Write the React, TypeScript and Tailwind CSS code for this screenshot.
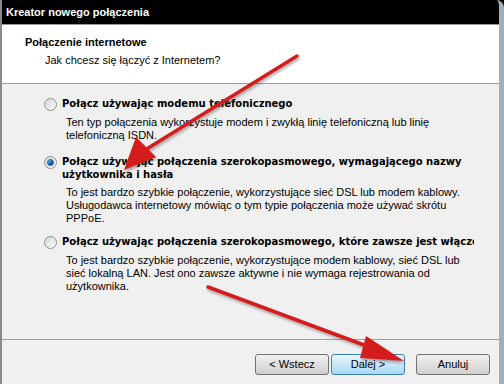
import React from 'react';

const OPTIONS = [
  {
    label: ['Połącz używając modemu telefonicznego'],
    desc: [
      'Ten typ połączenia wykorzystuje modem i zwykłą linię telefoniczną lub linię',
      'telefoniczną ISDN.',
    ],
    checked: false,
    gap: 'mt-0',
  },
  {
    label: ['Połącz używając połączenia szerokopasmowego, wymagającego nazwy', 'użytkownika i hasła'],
    desc: [
      'To jest bardzo szybkie połączenie, wykorzystujące sieć DSL lub modem kablowy.',
      'Usługodawca internetowy mówiąc o tym typie połączenia może używać skrótu',
      'PPPoE.',
    ],
    checked: true,
    gap: 'mt-[13px]',
  },
  {
    label: ['Połącz używając połączenia szerokopasmowego, które zawsze jest włączone'],
    desc: [
      'To jest bardzo szybkie połączenie, wykorzystujące modem kablowy, sieć DSL lub',
      'sieć lokalną LAN. Jest ono zawsze aktywne i nie wymaga rejestrowania od',
      'użytkownika.',
    ],
    checked: false,
    gap: 'mt-[10px]',
  },
];

// Vista style radio button
const Radio: React.FC<{ checked: boolean }> = ({ checked }) => (
  <div className="w-[13px] h-[13px] rounded-full border border-[#8e8f8f] bg-gradient-to-br from-[#d6d6d6] to-[#fbfbfb] flex items-center justify-center shrink-0">
    {checked && (
      <div className="w-[7px] h-[7px] rounded-full bg-gradient-to-br from-[#8fd3f7] via-[#2a6fb8] to-[#0c3a7a] border border-[#1b4f8f]" />
    )}
  </div>
);

const Button: React.FC<{ label: string; active?: boolean }> = ({ label, active }) => (
  <div
    className={`w-[74px] h-[21px] rounded-[3px] border flex items-center justify-center text-[11px] text-black ${
      active
        ? 'border-[#3c7fb1] bg-gradient-to-b from-[#eaf6fd] to-[#a7d9f5]'
        : 'border-[#707070] bg-gradient-to-b from-[#f2f2f2] to-[#cfcfcf]'
    }`}
  >
    {label}
  </div>
);

// red annotation arrows drawn on top of the screenshot
const Arrows: React.FC = () => (
  <svg className="absolute inset-0 pointer-events-none" width="504" height="384" viewBox="0 0 504 384">
    <defs>
      <filter id="sh" x="-20%" y="-20%" width="140%" height="140%">
        <feDropShadow dx="1" dy="2" stdDeviation="1.5" floodColor="#000" floodOpacity="0.35" />
      </filter>
    </defs>
    <g filter="url(#sh)" fill="#d51f1f" stroke="#d51f1f">
      <line x1="297" y1="56" x2="145" y2="150" strokeWidth="3.5" strokeLinecap="round" />
      <polygon points="124,170 136,137 156,157" stroke="none" />
      <line x1="208" y1="287" x2="372" y2="348" strokeWidth="3.5" strokeLinecap="round" />
      <polygon points="404,361 366,336 360,358" stroke="none" />
    </g>
  </svg>
);

const App: React.FC = () => {
  return (
    <div className="relative w-[504px] h-[384px] overflow-hidden bg-black font-['Liberation_Sans',Arial,sans-serif]">
      <div className="w-full h-full flex flex-col border-l-2 border-l-[#8a8a8a] border-r-[5px] border-r-[#9fb0bd] rounded-tr-[8px] overflow-hidden">
        {/* title bar */}
        <div className="h-[25px] bg-black border-b border-[#9a9a9a] flex items-center pl-[4px] shrink-0">
          <span className="text-white font-bold text-[11px]">Kreator nowego połączenia</span>
        </div>

        {/* header */}
        <div className="h-[59px] bg-white border-b border-[#a0a0a0] pl-[23px] pt-[10px] shrink-0">
          <div className="font-bold text-[11px] leading-[14px] text-black">Połączenie internetowe</div>
          <div className="text-[11px] leading-[14px] text-black pl-[20px] mt-[4px]">
            Jak chcesz się łączyć z Internetem?
          </div>
        </div>

        {/* options */}
        <div className="flex-1 bg-[#f0f0f0] border-b border-[#a0a0a0] pl-[42px] pt-[13px] flex flex-col overflow-hidden">
          {OPTIONS.map((o, i) => (
            <div key={i} className={`flex flex-col ${o.gap}`}>
              <div className="flex items-start gap-[5px]">
                <div className="pt-[1px]">
                  <Radio checked={o.checked} />
                </div>
                <div className="font-['DejaVu_Sans',sans-serif] font-bold text-[10px] leading-[13px] text-black whitespace-nowrap w-[412px] overflow-hidden">
                  {o.label.map((l, j) => (
                    <div key={j}>{l}</div>
                  ))}
                </div>
              </div>
              <div className="pl-[22px] mt-[5px] text-[11px] leading-[13px] text-black whitespace-nowrap">
                {o.desc.map((d, j) => (
                  <div key={j}>{d}</div>
                ))}
              </div>
            </div>
          ))}
        </div>

        {/* footer */}
        <div className="h-[44px] bg-[#f0f0f0] flex items-start pt-[14px] pl-[253px] shrink-0">
          <Button label="< Wstecz" />
          <div className="w-[2px]" />
          <Button label="Dalej >" active />
          <div className="w-[11px]" />
          <Button label="Anuluj" />
        </div>
      </div>
      <Arrows />
    </div>
  );
};

export default App;
